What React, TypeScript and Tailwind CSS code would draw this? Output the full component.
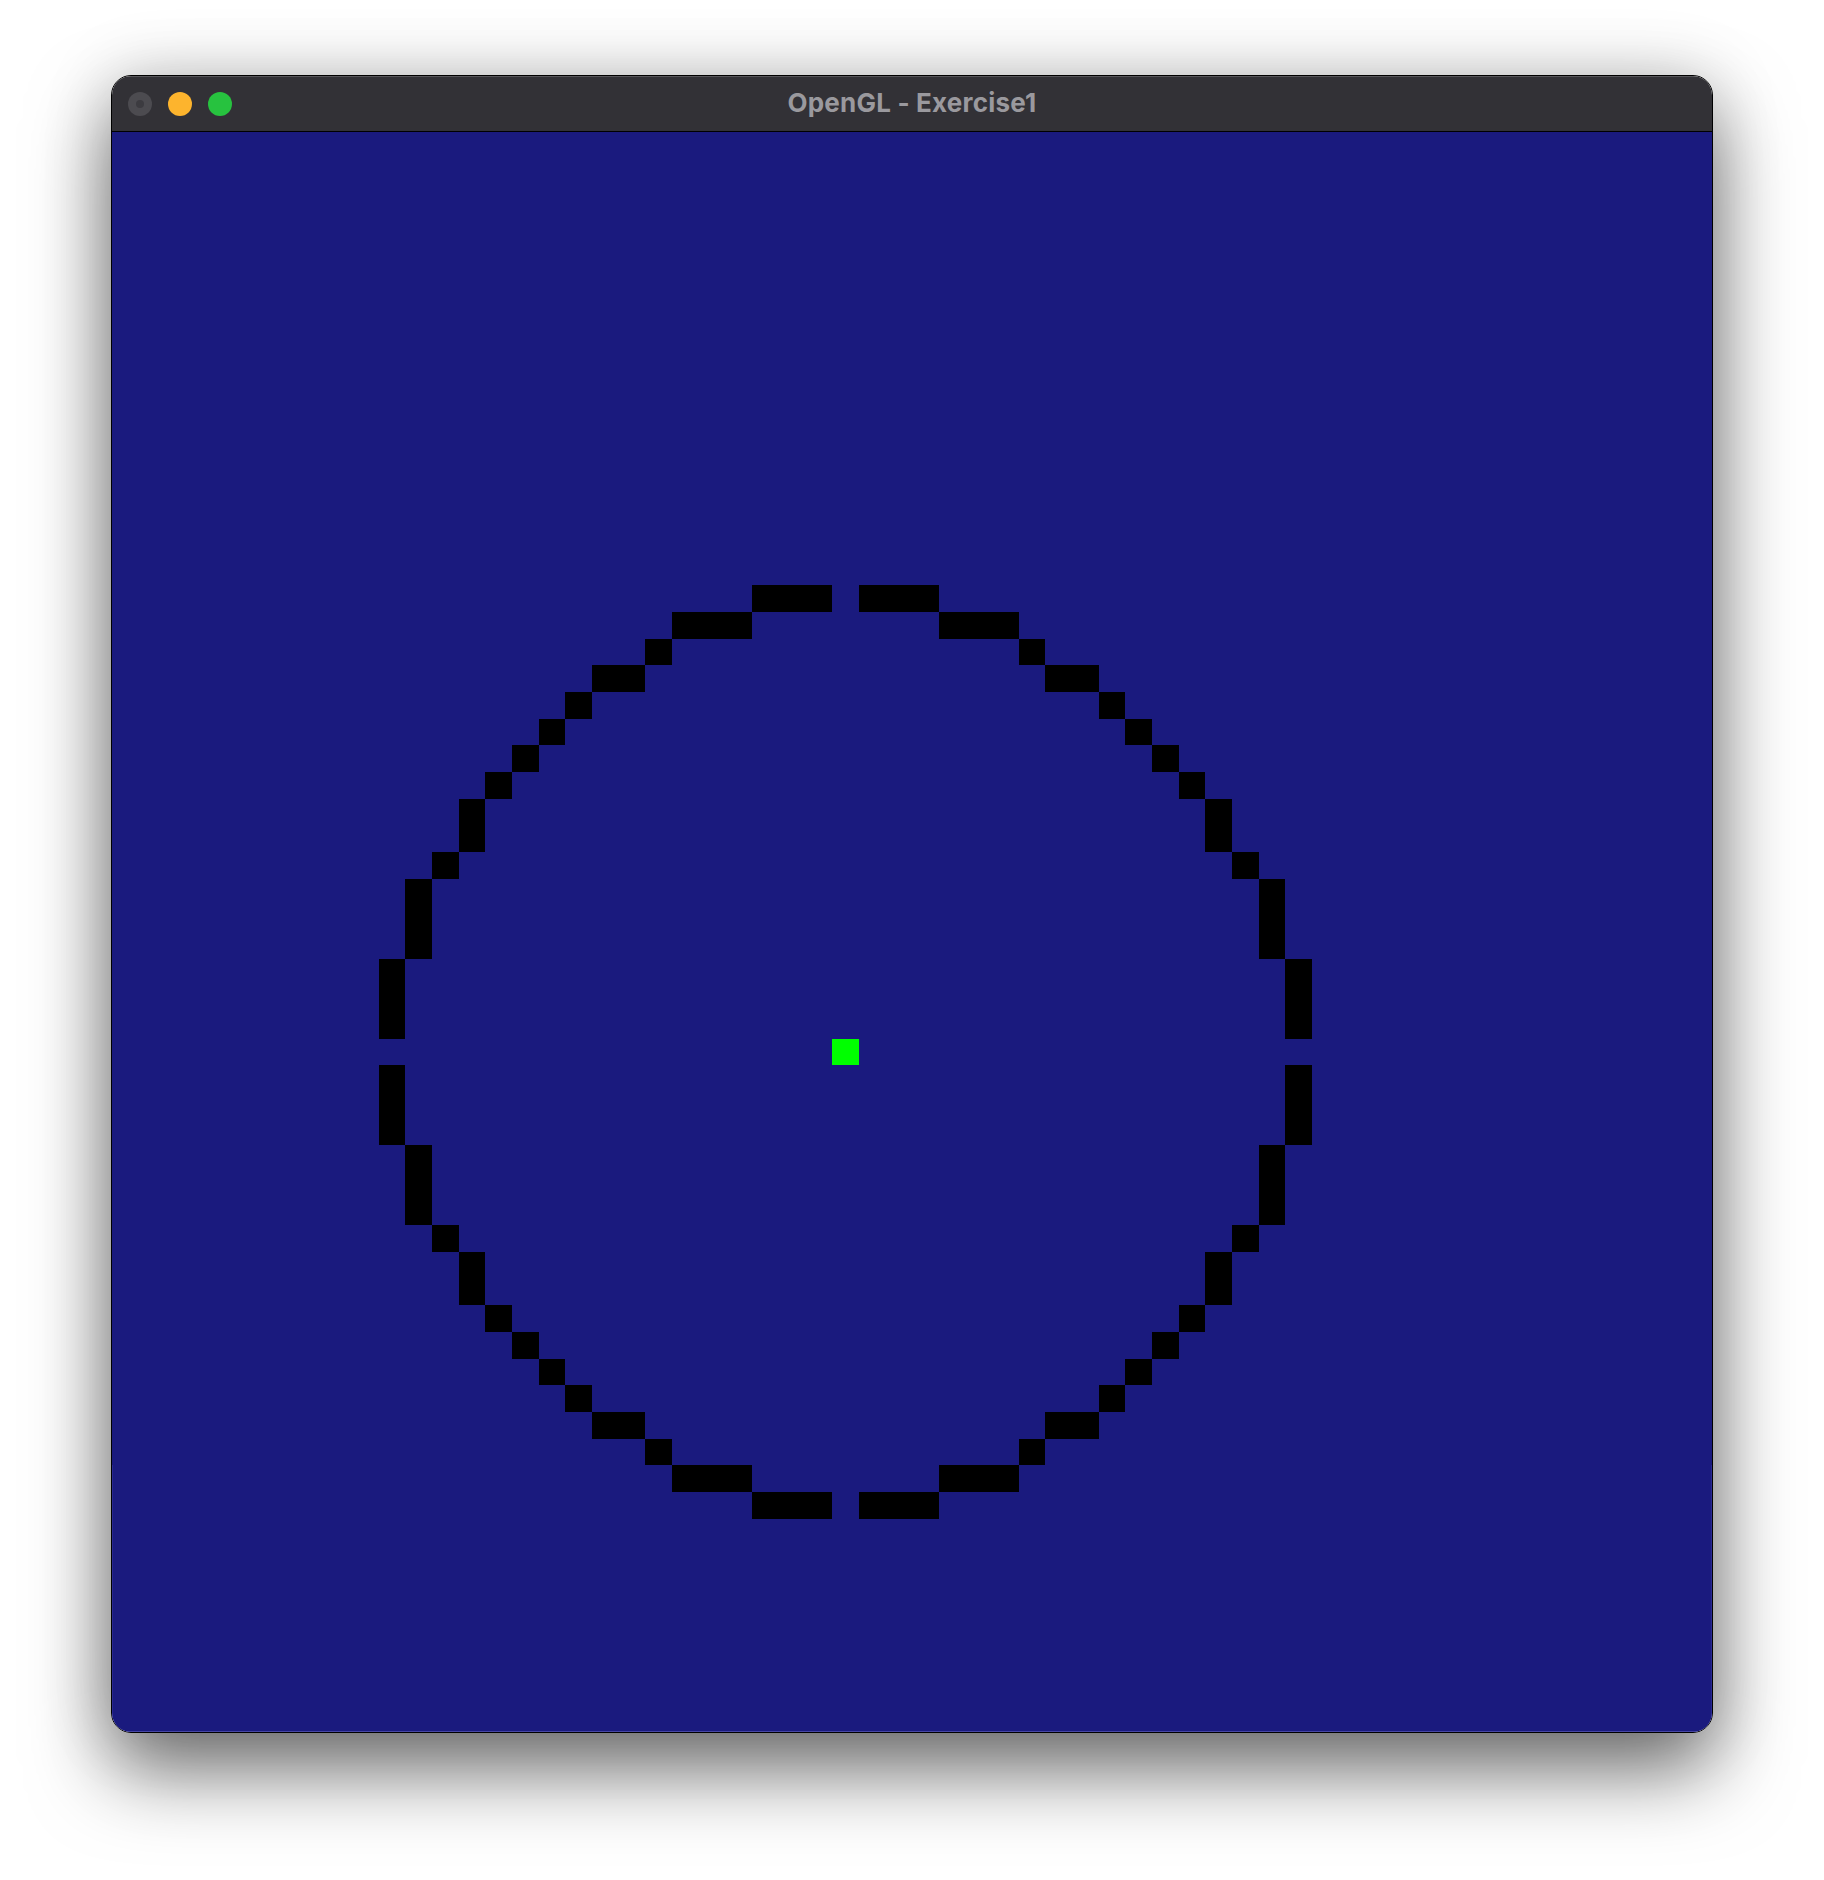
import React from 'react';

// top-right quadrant of the rasterised circle, as [dx, dy] from the centre cell
const quadrant: [number, number][] = [
  [1, -17], [2, -17], [3, -17],
  [4, -16], [5, -16], [6, -16],
  [7, -15],
  [8, -14], [9, -14],
  [10, -13],
  [11, -12],
  [12, -11],
  [13, -10],
  [14, -9], [14, -8],
  [15, -7],
  [16, -6], [16, -5], [16, -4],
  [17, -3], [17, -2], [17, -1],
];

const CX = 27;
const CY = 34;
const PX = 60 / 1600; // one screen pixel in viewBox units

const cells: [number, number][] = [];
for (const [dx, dy] of quadrant) {
  cells.push([CX + dx, CY + dy]);
  cells.push([CX - dx, CY + dy]);
  cells.push([CX + dx, CY - dy]);
  cells.push([CX - dx, CY - dy]);
}

function GLView() {
  return (
    <svg width={1600} height={1600} viewBox="0 0 60 60" shapeRendering="crispEdges" className="block">
      <rect x={0} y={0} width={60} height={60} fill="#1a1a7e" />
      {cells.map(([x, y]) => (
        <rect key={`${x}-${y}`} x={x} y={y} width={1} height={1} fill="#000000" />
      ))}
      <rect x={CX} y={CY} width={1} height={1} fill="#00ff00" />
      {/* faint edge highlight of the window frame */}
      <rect x={0} y={60 - PX} width={60} height={PX} fill="#4646a6" />
      <rect x={60 - PX} y={50} width={PX} height={10} fill="#3232a0" opacity={0.6} />
      <rect x={0} y={50} width={PX} height={10} fill="#3232a0" opacity={0.6} />
    </svg>
  );
}

export default function App() {
  return (
    <div className="w-[1824px] h-[1880px] bg-white pt-[75px]">
      <div className="mx-auto w-[1602px] rounded-[20px] border border-black overflow-hidden shadow-[0_38px_80px_rgba(0,0,0,0.55),0_0_70px_rgba(0,0,0,0.16)]">
        {/* Title bar */}
        <div className="h-[56px] bg-[#323136] border-b border-black shadow-[inset_0_1px_0_rgba(255,255,255,0.18)] grid grid-cols-[1fr_auto_1fr] items-center px-4">
          <div className="flex items-center gap-4">
            <div className="w-6 h-6 rounded-full bg-[#4c4b50] flex items-center justify-center">
              <div className="w-2 h-2 rounded-full bg-[#3c3b40]" />
            </div>
            <div className="w-6 h-6 rounded-full bg-[#fdb42d]" />
            <div className="w-6 h-6 rounded-full bg-[#27c23f]" />
          </div>
          <div className="-mt-[2px] text-[26px] leading-8 font-bold text-[#9a999e] tracking-[0.2px] font-['Inter','Liberation_Sans',sans-serif]">
            OpenGL - Exercise1
          </div>
          <div />
        </div>
        {/* GL canvas */}
        <GLView />
      </div>
    </div>
  );
}
